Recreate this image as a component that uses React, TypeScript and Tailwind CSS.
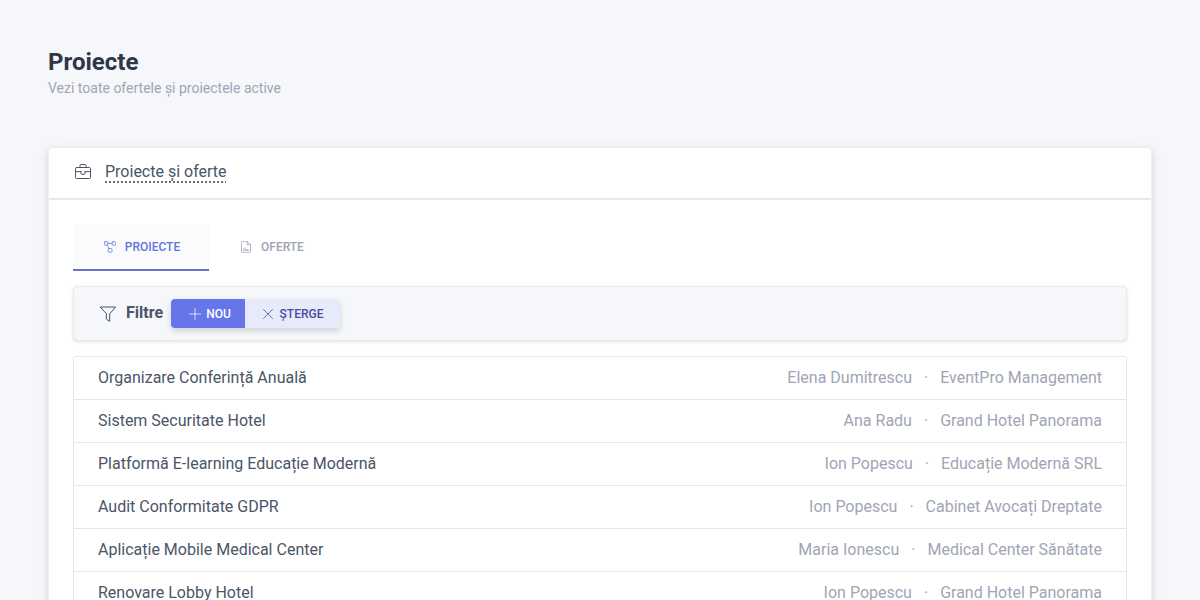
import type { ReactNode } from 'react';

type Project = { name: string; owner: string; client: string };

const projects: Project[] = [
  { name: 'Organizare Conferință Anuală', owner: 'Elena Dumitrescu', client: 'EventPro Management' },
  { name: 'Sistem Securitate Hotel', owner: 'Ana Radu', client: 'Grand Hotel Panorama' },
  { name: 'Platformă E-learning Educație Modernă', owner: 'Ion Popescu', client: 'Educație Modernă SRL' },
  { name: 'Audit Conformitate GDPR', owner: 'Ion Popescu', client: 'Cabinet Avocați Dreptate' },
  { name: 'Aplicație Mobile Medical Center', owner: 'Maria Ionescu', client: 'Medical Center Sănătate' },
  { name: 'Renovare Lobby Hotel', owner: 'Ion Popescu', client: 'Grand Hotel Panorama' },
];

function Icon({ className, children }: { className: string; children: ReactNode }) {
  return (
    <svg
      viewBox="0 0 24 24"
      fill="none"
      stroke="currentColor"
      strokeWidth="1.5"
      strokeLinecap="round"
      strokeLinejoin="round"
      className={`shrink-0 ${className}`}
      aria-hidden="true"
    >
      {children}
    </svg>
  );
}

function BriefcaseIcon() {
  return (
    <Icon className="size-4">
      <rect x="0.75" y="5.25" width="22.5" height="16.5" rx="1.5" />
      <path d="M7.5 5.250V2.250A1.500 1.500 0 0 1 9 0.750h6a1.500 1.500 0 0 1 1.500 1.500v3M0.750 11.500H9M15 11.500h8.250M9 11.500V14a1.500 1.500 0 0 0 1.500 1.500h3A1.500 1.500 0 0 0 15 14v-2.500" />
    </Icon>
  );
}

function NodesIcon() {
  return (
    <Icon className="size-3">
      <rect x="0.75" y="1.5" width="7" height="7" rx="1.5" />
      <rect x="16.25" y="1.5" width="7" height="7" rx="1.5" />
      <rect x="8.5" y="15" width="7.5" height="7.5" rx="1.5" />
      <path d="M7.750 5h8.500M6.500 8.500l4 6.500" />
    </Icon>
  );
}

function DocumentIcon() {
  return (
    <Icon className="size-3">
      <path d="M4.500 23.250a1.500 1.500 0 0 1-1.500-1.500V2.250a1.500 1.500 0 0 1 1.500-1.500h10L21 7.250v14.500a1.500 1.500 0 0 1-1.500 1.500zM14.500 0.750v6.500H21M6.500 18.500l3-5 3 4 1.500-1 3 2z" />
    </Icon>
  );
}

function FunnelIcon() {
  return (
    <Icon className="size-4">
      <path d="M0.750 1.500h22.500L14.500 12v11L9.500 19.500V12z" />
    </Icon>
  );
}

export default function App() {
  return (
    <main className="min-h-screen bg-[#f5f7fb] px-12 py-12 font-[Roboto,sans-serif] text-[#4a5568]">
      <header>
        <h1 className="text-2xl leading-7 font-bold text-[#2d3748]">Proiecte</h1>
        <p className="text-sm leading-6 text-[#a0a5b5]">Vezi toate ofertele și proiectele active</p>
      </header>

      <section className="mt-12 rounded border-x border-b border-[#eceef1] bg-white shadow-[0_2px_10px_rgba(0,0,0,0.15)]">
        <div className="flex h-[52px] items-center border-b-2 border-[#e6e7f5] px-[26px] pb-[2px]">
          <BriefcaseIcon />
          <h2 className="ml-[14px] text-base leading-6 underline decoration-[#686c76] decoration-dotted decoration-2 underline-offset-4">
            Proiecte și oferte
          </h2>
        </div>

        <div className="px-6 pt-6 pb-6">
          <div role="tablist" className="flex h-[47px] text-xs font-medium">
            <button
              type="button"
              role="tab"
              aria-selected="true"
              className="flex w-[136px] items-center justify-center gap-[9px] border-b-2 border-[#6674c4] bg-[#f9fbfd] pl-[2px] text-[#6674d9]"
            >
              <NodesIcon />
              PROIECTE
            </button>
            <button
              type="button"
              role="tab"
              aria-selected="false"
              className="flex items-center gap-[9px] border-b-2 border-transparent px-[31px] text-[#a0a3b2]"
            >
              <DocumentIcon />
              OFERTE
            </button>
          </div>

          <div className="mt-[15px] flex h-[55px] items-center rounded border border-[#e5eaf0] bg-[#f5f7fb] px-[26px] shadow-[0_1px_3px_rgba(0,0,0,0.12)]">
            <FunnelIcon />
            <h3 className="ml-[10px] pb-[2px] text-base leading-6 font-bold">Filtre</h3>
            <div className="ml-2 flex h-[29px] overflow-hidden rounded text-xs font-medium shadow-[0_3px_6px_rgba(0,0,0,0.15)]">
              <button type="button" className="flex w-[74px] items-center justify-center gap-[5px] bg-[#6675e8] pl-1 text-white">
                <Icon className="size-3">
                  <path d="M12 1v22M1 12h22" />
                </Icon>
                NOU
              </button>
              <button type="button" className="flex w-[95px] items-center justify-center gap-[6px] bg-[#e6eafb] text-[#474da0]">
                <Icon className="size-3">
                  <path d="M3 3l18 18M21 3L3 21" />
                </Icon>
                ȘTERGE
              </button>
            </div>
          </div>

          <ul className="mt-[15px] rounded border-x border-t border-[#e5e7ec]">
            {projects.map((project) => (
              <li key={project.name} className="flex items-center justify-between border-b border-[#e5e7ec] px-6 py-2 leading-[26px]">
                <span>{project.name}</span>
                <span className="flex text-[#a0a5b5]">
                  <span>{project.owner}</span>
                  <span className="px-3">·</span>
                  <span>{project.client}</span>
                </span>
              </li>
            ))}
          </ul>
        </div>
      </section>
    </main>
  );
}
